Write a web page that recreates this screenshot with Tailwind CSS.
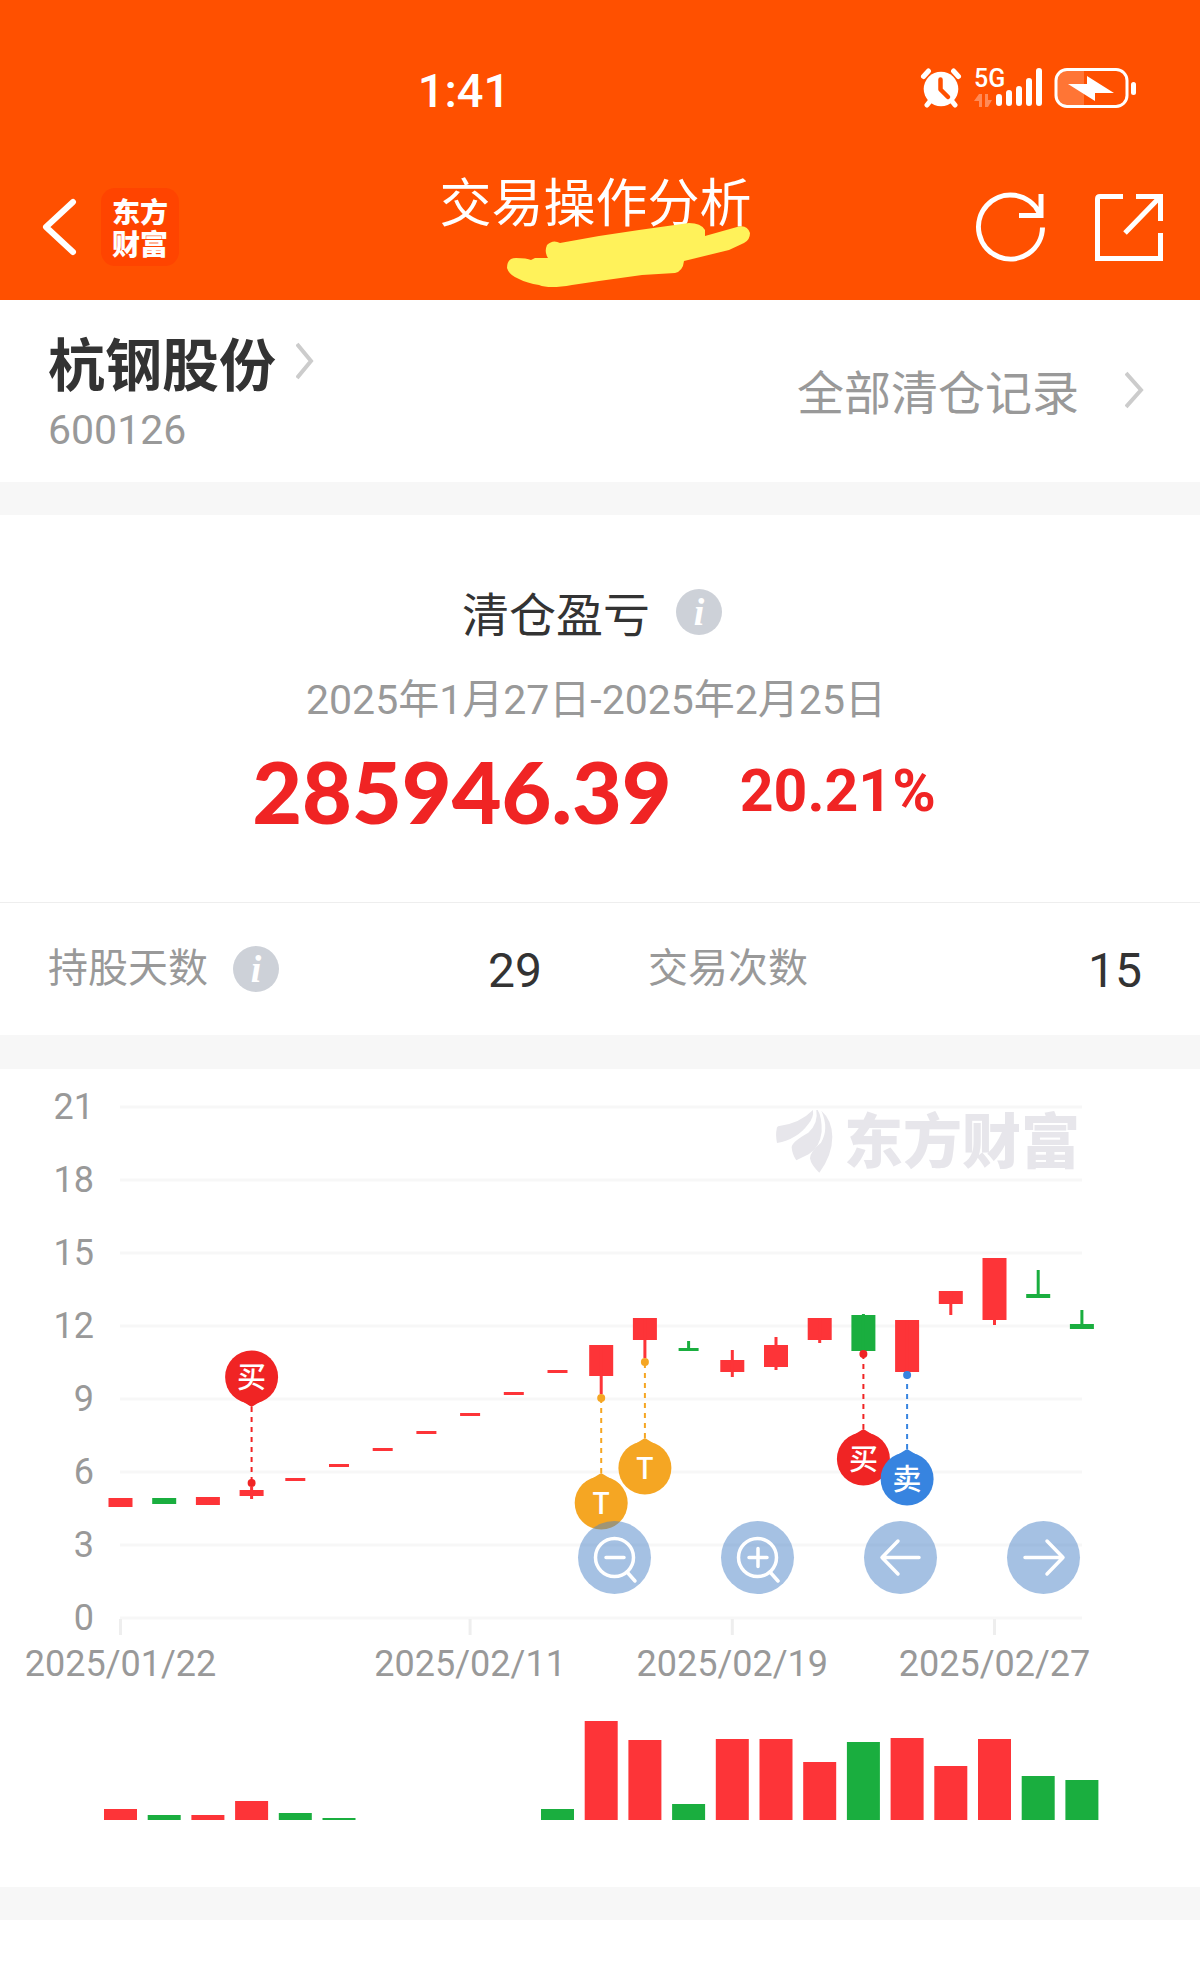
<!DOCTYPE html>
<html lang="zh-CN">
<head>
    <meta charset="UTF-8">
    <meta name="viewport" content="width=device-width, initial-scale=1.0">
    <title>交易操作分析</title>
    <script src="https://cdn.jsdelivr.net/npm/@tailwindcss/browser@4"></script>
</head>
<body class="bg-white text-[#333333] font-['Noto_Sans_CJK_SC',sans-serif]">
    <header class="bg-[#ff5000] text-white">
        <!-- Status bar -->
        <div class="grid grid-cols-[1fr_auto_1fr] items-center h-[154px] pl-4 pr-16 pt-6">
            <span></span>
            <span class="text-[47px] leading-[48px] font-medium font-['Roboto',sans-serif] mt-1 mr-[224px]">1:41</span>
            <div class="flex items-center justify-end gap-3 mb-[2px]">
                <svg class="w-[42px] h-[42px]" viewBox="0 0 42 42" fill="none" stroke="#fff" stroke-width="5" stroke-linecap="round">
                    <circle cx="21" cy="22" r="17.3" fill="#fff" stroke="none"/>
                    <path d="M3.5 9.5L8.5 4M38.5 9.5L33.5 4M7 38l4-5M35 38l-4-5"/>
                    <path d="M20.5 12.500V22.500L28 30" stroke="#ff5000" stroke-width="4.500" stroke-linejoin="round"/>
                </svg>
                <div class="flex items-start h-[42px]">
                    <div class="flex flex-col gap-1">
                        <span class="w-[26px] text-[25px] leading-[23px] font-medium font-['Roboto',sans-serif]">5G</span>
                        <svg class="w-[18px] h-[13px]" viewBox="0 0 18 13" fill="#ff8a57"><path d="M5 0v13h3V0zM5 0L0 7h5zM11 0v13h3V0zM14 13l4-7h-4z"/></svg>
                    </div>
                    <svg class="w-[46px] h-[40px] -ml-1" viewBox="0 0 46 40" stroke="#fff" stroke-width="6" stroke-linecap="round">
                        <path d="M3 30v6M13 26v10M23 22v14M33 14v22M43 4v32"/>
                    </svg>
                </div>
                <svg class="w-[82px] h-[42px]" viewBox="0 0 82 42">
                    <path d="M30 3v36H12Q3 38 3 29V12Q3 4 12 3z" fill="#ff7535"/>
                    <rect x="2" y="2.500" width="71" height="37" rx="11" fill="none" stroke="#fff" stroke-width="3"/>
                    <rect x="77" y="15" width="5" height="13" rx="2.500" fill="#fff"/>
                    <path d="M33 9l27 17H41v8L14 17h19z" fill="#fff"/>
                </svg>
            </div>
        </div>
        <!-- Title bar -->
        <div class="grid grid-cols-[1fr_auto_1fr] items-center h-[146px] pl-7 pr-[37px]">
            <div class="flex items-center gap-[17px]">
                <button type="button" aria-label="返回" class="pl-3">
                    <svg class="w-[44px] h-[62px]" viewBox="0 0 44 62" fill="none" stroke="#fff" stroke-width="6" stroke-linecap="round" stroke-linejoin="round"><path d="M33 6L6 31l27 25"/></svg>
                </button>
                <div class="flex items-center size-[78px] px-[11px] rounded-[14px] bg-[#ff4400]">
                    <span class="w-[56px] text-[28px] leading-[32px] font-black">东方财富</span>
                </div>
            </div>
            <div class="relative self-start mt-5">
                <h1 class="text-[52px] leading-[52px]">交易操作分析</h1>
                <svg class="absolute left-[68px] top-[49px] w-[244px] h-[66px]" viewBox="0 0 244 66" fill="#fff25a">
                    <path d="M0 45Q0 35 9 35Q20 35 24 37L28 35L41 35Q37 29 40 22Q46 16 53 20L92 13L132 7L182 0Q194 0 198 7L198 13L230 4Q240 1 243 10Q243 17 237 20L222 27L177 38Q176 48 168 50L135 52L92 58L65 62Q42 66 32 62Q20 60 12 56Q2 52 0 45Z"/>
                </svg>
            </div>
            <div class="flex items-center justify-end gap-[48px]">
                <button type="button" aria-label="刷新">
                    <svg class="w-[70px] h-[70px]" viewBox="0 0 70 70" fill="none" stroke="#fff" stroke-width="5"><path d="M67.500 35.500A32 32 0 1 1 64 20.500M66 2V23.500H44"/></svg>
                </button>
                <button type="button" aria-label="分享">
                    <svg class="w-[70px] h-[70px]" viewBox="0 0 70 70" fill="none" stroke="#fff" stroke-width="5"><path d="M30 4.500H7Q4.500 4.500 4.500 7V66.500H67.500V41M43 4.500H67.500V29M67.500 4.500L32 41"/></svg>
                </button>
            </div>
        </div>
    </header>

    <main>
        <!-- Stock -->
        <section class="flex items-center justify-between pl-12 pr-14 pt-[26px] pb-6">
            <div>
                <a href="#" class="flex items-center gap-[20px] text-[57px] leading-[70px] font-bold">
                    杭钢股份
                    <svg class="w-[18px] h-[38px]" viewBox="0 0 18 38" fill="none" stroke="#ccc" stroke-width="4"><path d="M1 2l14 17L1 36"/></svg>
                </a>
                <p class="mt-[6px] text-[41px] leading-[56px] text-[#999999] font-['Roboto',sans-serif]">600126</p>
            </div>
            <a href="#" class="flex items-center gap-[46px] pb-1 text-[47px] leading-[60px] text-[#999999]">
                全部清仓记录
                <svg class="w-[19px] h-[38px]" viewBox="0 0 19 38" fill="none" stroke="#ccc" stroke-width="4"><path d="M1 2l15 17L1 36"/></svg>
            </a>
        </section>
        <div class="h-[33px] bg-[#f7f7f7]"></div>

        <!-- Profit summary -->
        <section class="flex flex-col items-center h-[388px] pt-[65px] border-b border-[#eeeeee]">
            <div class="flex items-center gap-[26px] mr-4">
                <h2 class="text-[47px] leading-[64px]">清仓盈亏</h2>
                <button type="button" aria-label="清仓盈亏说明" class="size-[46px] rounded-full bg-[#cdd1d8] text-white font-['Liberation_Serif',serif] italic font-bold text-[38px] leading-[46px]">i</button>
            </div>
            <p class="mt-7 mr-2 text-[41px] leading-[56px] text-[#999999] font-['Roboto','Noto_Sans_CJK_SC',sans-serif]">2025年1月27日-2025年2月25日</p>
            <div class="flex items-center gap-[68px] mt-[18px] mr-3 text-[#f02424] font-bold">
                <span class="text-[86px] leading-[90px] font-['Lato',sans-serif] font-black">285946.39</span>
                <span class="text-[59px] leading-[80px] font-['Roboto',sans-serif]">20.21%</span>
            </div>
        </section>
        <section class="grid grid-cols-2 h-[132px] text-[40px] text-[#999999]">
            <div class="flex items-center pl-12 pr-[58px]">
                <span class="mb-2">持股天数</span>
                <button type="button" aria-label="持股天数说明" class="ml-[25px] size-[46px] rounded-full bg-[#cdd1d8] text-white font-['Liberation_Serif',serif] italic font-bold text-[38px] leading-[46px]">i</button>
                <span class="ml-auto mt-1 text-[48px] text-[#333333] font-['Roboto',sans-serif]">29</span>
            </div>
            <div class="flex items-center justify-between pl-12 pr-[58px]">
                <span class="mb-2">交易次数</span>
                <span class="mt-1 text-[48px] text-[#333333] font-['Roboto',sans-serif]">15</span>
            </div>
        </section>
        <div class="h-[34px] bg-[#f7f7f7]"></div>

        <!-- Chart -->
        <section class="relative">
            <svg id="chart" class="block w-full h-auto" viewBox="0 0 1200 818">
                <g id="grid" stroke="#f7f7f7" stroke-width="3"></g>
                <g fill="#e7e6eb">
                    <g transform="translate(740 -9) scale(.3333)">
                        <path d="M110 208Q110 199 118 198Q180 190 219 150Q222 172 205 192Q172 238 111 249Q106 224 110 208Z"/>
                        <path d="M229 150Q236 190 205 218Q155 246 155 262Q157 285 169 301L206 283Q240 262 245 215Q246 170 233 150Z"/>
                        <path d="M244 152Q268 205 243 248Q210 275 210 295Q213 315 238 338Q277 285 277 230Q276 180 244 152Z"/>
                    </g>
                    <text x="844" y="94" font-size="59" font-weight="900">东方财富</text>
                </g>
                <g id="labels" class="font-['Roboto',sans-serif]" font-size="36" fill="#999"></g>
                <g id="candles"></g>
                <g id="volumes"></g>
                <g id="markers"></g>
            </svg>
            <div class="absolute right-[10%] bottom-[35.8%] flex gap-[70px]">
                <button type="button" aria-label="缩小" class="size-[73px] rounded-full bg-[#4b83c7]/50">
                    <svg viewBox="0 0 73 73" fill="none" stroke="#fff" stroke-width="3.500" stroke-linecap="round"><circle cx="36.500" cy="36.500" r="19"/><path d="M28 36.500h18M49 51l8 9"/></svg>
                </button>
                <button type="button" aria-label="放大" class="size-[73px] rounded-full bg-[#4b83c7]/50">
                    <svg viewBox="0 0 73 73" fill="none" stroke="#fff" stroke-width="3.500" stroke-linecap="round"><circle cx="36.500" cy="36.500" r="19"/><path d="M28 36.500h18M37 27.500v18M49 51l8 9"/></svg>
                </button>
                <button type="button" aria-label="向左" class="size-[73px] rounded-full bg-[#4b83c7]/50">
                    <svg viewBox="0 0 73 73" fill="none" stroke="#fff" stroke-width="3.500" stroke-linecap="round" stroke-linejoin="round"><path d="M55 36.500H18M34 20L18 36.500L34 53"/></svg>
                </button>
                <button type="button" aria-label="向右" class="size-[73px] rounded-full bg-[#4b83c7]/50">
                    <svg viewBox="0 0 73 73" fill="none" stroke="#fff" stroke-width="3.500" stroke-linecap="round" stroke-linejoin="round"><path d="M18 36.500H55M40 20L56 36.500L40 53"/></svg>
                </button>
            </div>
        </section>
        <div class="h-[33px] bg-[#f7f7f7]"></div>
    </main>

    <script>
        const RED = '#fd3438';
        const GREEN = '#1aae3f';
        const LEFT = 120.5;
        const STEP = 43.7;
        const VOLUME_BASE = 751;

        // [color, body top, body bottom, high, low, volume height, volume color if different]
        const days = [
            [RED, 429, 438, 429, 438, 11],
            [GREEN, 429, 435, 429, 435, 5],
            [RED, 428, 436, 428, 436, 5],
            [RED, 421, 427, 418, 430, 19],
            [RED, 409, 412, 409, 412, 7, GREEN],
            [RED, 395, 398, 395, 398, 2, GREEN],
            [RED, 379, 382, 379, 382, 0],
            [RED, 362, 365, 362, 365, 0],
            [RED, 344, 347, 344, 347, 0],
            [RED, 323, 326, 323, 326, 0],
            [RED, 301, 304, 301, 304, 11, GREEN],
            [RED, 276, 307, 276, 325, 99],
            [RED, 249, 271, 249, 289, 80],
            [GREEN, 279, 282, 272, 282, 16],
            [RED, 291, 303, 281, 308, 81],
            [RED, 276, 298, 268, 301, 81],
            [RED, 249, 271, 249, 274, 58],
            [GREEN, 246, 282, 245, 282, 78],
            [RED, 251, 303, 251, 303, 82],
            [RED, 222, 235, 222, 246, 54],
            [RED, 189, 251, 189, 256, 81],
            [GREEN, 225, 229, 201, 229, 44],
            [GREEN, 255, 260, 241, 260, 40]
        ];

        // Trades: day index, label, color, dot y, bubble center y
        const trades = [
            [3, '买', '#f02424', 414, 308],
            [11, 'T', '#f5a623', 329, 434],
            [12, 'T', '#f5a623', 293, 399],
            [17, '买', '#f02424', 285, 390],
            [18, '卖', '#3784e0', 306, 410]
        ];

        const dates = [[0, '2025/01/22'], [8, '2025/02/11'], [14, '2025/02/19'], [20, '2025/02/27']];

        const xOf = i => LEFT + i * STEP;

        // Grid lines and price labels
        let grid = '';
        let labels = '';
        for (let v = 21, y = 38; v >= 0; v -= 3, y += 73) {
            grid += `<path d="M120 ${y}H1082"/>`;
            labels += `<text x="94" y="${y + 12}" text-anchor="end">${v}</text>`;
        }
        dates.forEach(([i, text]) => {
            grid += `<path d="M${xOf(i)} 550v16" stroke="#eee"/>`;
            labels += `<text x="${xOf(i)}" y="607" text-anchor="middle">${text}</text>`;
        });
        document.getElementById('grid').innerHTML = grid;
        document.getElementById('labels').innerHTML = labels;

        // Candles and volume bars
        let candles = '';
        let volumes = '';
        days.forEach(([color, top, bottom, high, low, volume, volumeColor], i) => {
            const x = xOf(i);
            const w = bottom - top > 3 ? 24 : 20;
            candles += `<rect x="${x - w / 2}" y="${top}" width="${w}" height="${bottom - top}" fill="${color}"/>`;
            candles += `<rect x="${x - 1.5}" y="${high}" width="3" height="${low - high}" fill="${color}"/>`;
            volumes += `<rect x="${x - 16.5}" y="${VOLUME_BASE - volume}" width="33" height="${volume}" fill="${volumeColor || color}"/>`;
        });
        document.getElementById('candles').innerHTML = candles;
        document.getElementById('volumes').innerHTML = volumes;

        // Trade bubbles, the tip points at the dot
        document.getElementById('markers').innerHTML = trades.map(([i, text, color, dot, cy]) => {
            const x = xOf(i);
            const dir = dot > cy ? 1 : -1;
            return `<path d="M${x} ${cy + 30 * dir}V${dot}" stroke="${color}" stroke-width="2" stroke-dasharray="5 5"/>
                <circle cx="${x}" cy="${dot}" r="4" fill="${color}"/>
                <circle cx="${x}" cy="${cy}" r="26.5" fill="${color}"/>
                <path d="M${x - 18} ${cy + 19 * dir}L${x} ${cy + 30 * dir}L${x + 18} ${cy + 19 * dir}Z" fill="${color}"/>
                <text x="${x}" y="${cy + 11}" text-anchor="middle" font-size="29" font-weight="500" fill="#fff">${text}</text>`;
        }).join('');
    </script>
</body>
</html>
